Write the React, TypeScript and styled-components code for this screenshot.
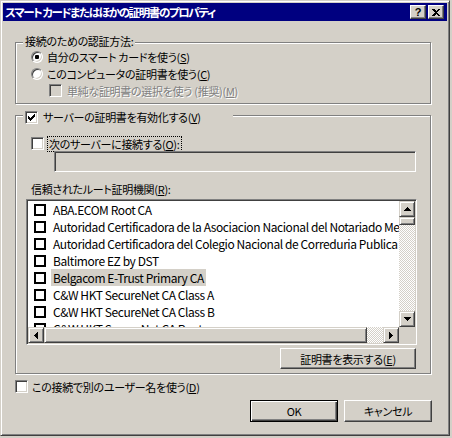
import React from 'react';
import styled, { createGlobalStyle } from 'styled-components';

const FACE = '#d4d0c8';
const SHADOW = '#808080';
const DARK = '#404040';
const HILITE = '#ffffff';

const GlobalStyle = createGlobalStyle`
  html, body { margin: 0; padding: 0; background: ${FACE}; }
  body {
    font-family: "Noto Sans CJK JP", "Liberation Sans", sans-serif;
    font-size: 11px;
    line-height: 14px;
    color: #000;
    font-feature-settings: "palt";
  }
  u { text-decoration: underline; text-underline-offset: 1px; }
`;

const Window = styled.div`
  box-sizing: border-box;
  width: 450px;
  height: 436px;
  background: ${FACE};
  border: 1px solid;
  border-color: ${FACE} ${DARK} ${DARK} ${FACE};
  box-shadow: inset 1px 1px ${HILITE}, inset -1px -1px ${SHADOW};
  padding: 2px;
  display: flex;
  flex-direction: column;
`;

const TitleBar = styled.div`
  flex: none;
  height: 18px;
  background: #000080;
  color: #fff;
  display: flex;
  align-items: center;
  padding: 0 3px 0 2px;
`;

const TitleText = styled.span`
  flex: 1;
  font-weight: bold;
  font-size: 11.5px;
  white-space: nowrap;
  letter-spacing: -1.4px;
`;

const CaptionButtons = styled.div`
  display: flex;
  gap: 2px;
`;

const CaptionButton = styled.div`
  box-sizing: border-box;
  width: 16px;
  height: 14px;
  background: ${FACE};
  border: 1px solid;
  border-color: ${HILITE} ${DARK} ${DARK} ${HILITE};
  box-shadow: inset -1px -1px ${SHADOW};
  display: flex;
  align-items: center;
  justify-content: center;
  color: #000;
  font-family: "Liberation Sans", sans-serif;
  font-weight: bold;
  font-size: 11px;
  line-height: 11px;
`;

const Content = styled.div`
  display: flex;
  flex-direction: column;
  padding: 21px 16px 0 12px;
`;

const Group = styled.div<{ $pad: string; $mt?: number }>`
  position: relative;
  box-sizing: border-box;
  border: 1px solid ${SHADOW};
  box-shadow: inset 1px 1px ${HILITE}, 1px 1px ${HILITE};
  padding: ${(p) => p.$pad};
  margin-top: ${(p) => p.$mt ?? 0}px;
  display: flex;
  flex-direction: column;
`;

const Legend = styled.div<{ $top: number; $width?: number }>`
  position: absolute;
  left: 7px;
  top: ${(p) => p.$top}px;
  ${(p) => (p.$width ? `width: ${p.$width}px;` : '')}
  box-sizing: border-box;
  height: 14px;
  padding: 0 2px;
  background: ${FACE};
  display: flex;
  align-items: center;
  gap: 5px;
  white-space: nowrap;
  letter-spacing: -0.3px;
`;

const OptionRow = styled.div<{ $h?: number; $ml?: number; $gap?: number; $mt?: number }>`
  height: ${(p) => p.$h ?? 17}px;
  margin-left: ${(p) => p.$ml ?? 0}px;
  margin-top: ${(p) => p.$mt ?? 0}px;
  display: flex;
  align-items: center;
  gap: ${(p) => p.$gap ?? 4}px;
  white-space: nowrap;
`;

const Label = styled.span<{ $disabled?: boolean; $focus?: boolean }>`
  letter-spacing: -0.3px;
  color: ${(p) => (p.$disabled ? SHADOW : '#000')};
  ${(p) => (p.$disabled ? `text-shadow: 1px 1px ${HILITE};` : '')}
  ${(p) => (p.$focus ? `outline: 1px dotted #000; outline-offset: 0px; padding: 0 1px;` : '')}
`;

const RadioCircle = styled.span<{ $checked?: boolean }>`
  box-sizing: border-box;
  flex: none;
  width: 12px;
  height: 12px;
  border-radius: 50%;
  border: 1px solid;
  border-color: ${SHADOW} ${HILITE} ${HILITE} ${SHADOW};
  box-shadow: inset 1px 1px ${DARK}, inset -1px -1px ${FACE};
  background: #fff;
  display: flex;
  align-items: center;
  justify-content: center;
  &::after {
    content: '';
    display: ${(p) => (p.$checked ? 'block' : 'none')};
    width: 4px;
    height: 4px;
    border-radius: 1px;
    background: #000;
  }
`;

const CheckBox = styled.span<{ $disabled?: boolean }>`
  box-sizing: border-box;
  flex: none;
  width: 13px;
  height: 13px;
  border: 1px solid;
  border-color: ${SHADOW} ${HILITE} ${HILITE} ${SHADOW};
  box-shadow: inset 1px 1px ${DARK}, inset -1px -1px ${FACE};
  background: ${(p) => (p.$disabled ? FACE : '#fff')};
  display: flex;
  align-items: center;
  justify-content: center;
`;

const CheckMark = () => (
  <svg width="7" height="7" viewBox="0 0 7 7" shapeRendering="crispEdges">
    <polygon points="0,2 2,4 7,-1 7,2 2,7 0,5" fill="#000" />
  </svg>
);

const TextBox = styled.div`
  box-sizing: border-box;
  width: 362px;
  height: 21px;
  margin-left: 28px;
  border: 1px solid;
  border-color: ${SHADOW} ${HILITE} ${HILITE} ${SHADOW};
  box-shadow: inset 1px 1px ${DARK}, inset -1px -1px ${FACE};
  background: ${FACE};
`;

const FieldLabel = styled.div`
  margin: 10px 0 0 5px;
  height: 14px;
  letter-spacing: -0.3px;
  white-space: nowrap;
`;

const ListBox = styled.div`
  box-sizing: border-box;
  margin-top: 3px;
  width: 391px;
  height: 146px;
  border: 1px solid;
  border-color: ${SHADOW} ${HILITE} ${HILITE} ${SHADOW};
  box-shadow: inset 1px 1px ${DARK}, inset -1px -1px ${FACE};
  padding: 1px;
  display: grid;
  grid-template-columns: 371px 16px;
  grid-template-rows: 126px 16px;
`;

const ListItems = styled.div`
  background: #fff;
  overflow: hidden;
  display: flex;
  flex-direction: column;
`;

const ListRow = styled.div`
  flex: none;
  height: 17px;
  display: flex;
  align-items: center;
  padding-left: 6px;
  gap: 5px;
  white-space: nowrap;
`;

const ListCheck = styled.span`
  box-sizing: border-box;
  flex: none;
  width: 12px;
  height: 12px;
  border: 2px solid #000;
  background: #fff;
`;

const ItemText = styled.span<{ $selected?: boolean }>`
  padding: 0 2px;
  font-size: 12px;
  line-height: 17px;
  background: ${(p) => (p.$selected ? FACE : 'transparent')};
  letter-spacing: -0.42px;
`;

const ScrollTrack = styled.div<{ $vertical?: boolean }>`
  display: flex;
  flex-direction: ${(p) => (p.$vertical ? 'column' : 'row')};
  background: repeating-conic-gradient(${HILITE} 0 25%, ${FACE} 0 50%) 0 0 / 2px 2px;
`;

const RaisedPart = styled.div<{ $w?: number; $h?: number }>`
  box-sizing: border-box;
  flex: none;
  width: ${(p) => (p.$w ? `${p.$w}px` : 'auto')};
  height: ${(p) => (p.$h ? `${p.$h}px` : 'auto')};
  background: ${FACE};
  border: 1px solid;
  border-color: ${FACE} ${DARK} ${DARK} ${FACE};
  box-shadow: inset 1px 1px ${HILITE}, inset -1px -1px ${SHADOW};
  display: flex;
  align-items: center;
  justify-content: center;
`;

const Spacer = styled.div`
  flex: 1;
`;

const Corner = styled.div`
  background: ${FACE};
`;

type Dir = 'up' | 'down' | 'left' | 'right';
const Arrow = ({ dir }: { dir: Dir }) => {
  const pts: Record<Dir, string> = {
    up: '3.5,0 7,4 0,4',
    down: '0,0 7,0 3.5,4',
    left: '4,0 4,7 0,3.5',
    right: '0,0 4,3.5 0,7',
  };
  const vertical = dir === 'up' || dir === 'down';
  return (
    <svg
      width={vertical ? 7 : 4}
      height={vertical ? 4 : 7}
      viewBox={vertical ? '0 0 7 4' : '0 0 4 7'}
      shapeRendering="crispEdges"
    >
      <polygon points={pts[dir]} fill="#000" />
    </svg>
  );
};

const PushButton = styled.div<{ $w: number; $h: number; $default?: boolean }>`
  box-sizing: border-box;
  width: ${(p) => p.$w}px;
  height: ${(p) => p.$h}px;
  background: ${FACE};
  border: 1px solid;
  border-color: ${(p) => (p.$default ? '#000' : `${HILITE} ${DARK} ${DARK} ${HILITE}`)};
  box-shadow: ${(p) =>
    p.$default
      ? `inset 1px 1px ${HILITE}, inset -1px -1px ${DARK}, inset -2px -2px ${SHADOW}`
      : `inset -1px -1px ${SHADOW}`};
  display: flex;
  align-items: center;
  justify-content: center;
  white-space: nowrap;
  letter-spacing: -0.3px;
`;

const ButtonRow = styled.div`
  display: flex;
  justify-content: flex-end;
  gap: 6px;
  margin: 7px -1px 0 0;
`;

const ViewButton = styled(PushButton)`
  align-self: flex-end;
  margin: 3px 1px 0 0;
`;

const items = [
  'ABA.ECOM Root CA',
  'Autoridad Certificadora de la Asociacion Nacional del Notariado Mexicano',
  'Autoridad Certificadora del Colegio Nacional de Correduria Publica Mexicana',
  'Baltimore EZ by DST',
  'Belgacom E-Trust Primary CA',
  'C&W HKT SecureNet CA Class A',
  'C&W HKT SecureNet CA Class B',
  'C&W HKT SecureNet CA Root',
];

export default function App() {
  return (
    <>
      <GlobalStyle />
      <Window>
        <TitleBar>
          <TitleText>スマート カードまたはほかの証明書のプロパティ</TitleText>
          <CaptionButtons>
            <CaptionButton>?</CaptionButton>
            <CaptionButton>
              <svg width="8" height="7" viewBox="0 0 8 7" shapeRendering="crispEdges">
                <path d="M0 0 L2 0 L4 2 L6 0 L8 0 L5 3.5 L8 7 L6 7 L4 5 L2 7 L0 7 L3 3.5 Z" fill="#000" />
              </svg>
            </CaptionButton>
          </CaptionButtons>
        </TitleBar>
        <Content>
          <Group $pad="5px 0 4px 15px">
            <Legend $top={-9}>接続のための認証方法:</Legend>
            <OptionRow>
              <RadioCircle $checked />
              <Label>自分のスマート カードを使う(<u>S</u>)</Label>
            </OptionRow>
            <OptionRow>
              <RadioCircle />
              <Label>このコンピュータの証明書を使う(<u>C</u>)</Label>
            </OptionRow>
            <OptionRow $ml={18} $gap={5}>
              <CheckBox $disabled />
              <Label $disabled>単純な証明書の選択を使う (推奨)(<u>M</u>)</Label>
            </OptionRow>
          </Group>
          <Group $pad="20px 13px 4px 10px" $mt={11}>
            <Legend $top={-6} $width={210}>
              <CheckBox>
                <CheckMark />
              </CheckBox>
              <span>サーバーの証明書を有効化する(<u>V</u>)</span>
            </Legend>
            <OptionRow $h={15} $ml={5} $gap={4}>
              <CheckBox />
              <Label $focus>次のサーバーに接続する(<u>O</u>):</Label>
            </OptionRow>
            <TextBox />
            <FieldLabel>信頼されたルート証明機関(<u>R</u>):</FieldLabel>
            <ListBox>
              <ListItems>
                {items.map((t, i) => (
                  <ListRow key={t}>
                    <ListCheck />
                    <ItemText $selected={i === 4}>{t}</ItemText>
                  </ListRow>
                ))}
              </ListItems>
              <ScrollTrack $vertical>
                <RaisedPart $h={16}>
                  <Arrow dir="up" />
                </RaisedPart>
                <RaisedPart $h={8} />
                <Spacer />
                <RaisedPart $h={16}>
                  <Arrow dir="down" />
                </RaisedPart>
              </ScrollTrack>
              <ScrollTrack>
                <RaisedPart $w={16}>
                  <Arrow dir="left" />
                </RaisedPart>
                <RaisedPart $w={323} />
                <Spacer />
                <RaisedPart $w={16}>
                  <Arrow dir="right" />
                </RaisedPart>
              </ScrollTrack>
              <Corner />
            </ListBox>
            <ViewButton $w={136} $h={21}>
              証明書を表示する(<u>E</u>)
            </ViewButton>
          </Group>
          <OptionRow $h={13} $gap={4} $mt={6}>
            <CheckBox />
            <Label>この接続で別のユーザー名を使う(<u>D</u>)</Label>
          </OptionRow>
          <ButtonRow>
            <PushButton $w={88} $h={22} $default>
              OK
            </PushButton>
            <PushButton $w={88} $h={22}>
              キャンセル
            </PushButton>
          </ButtonRow>
        </Content>
      </Window>
    </>
  );
}
